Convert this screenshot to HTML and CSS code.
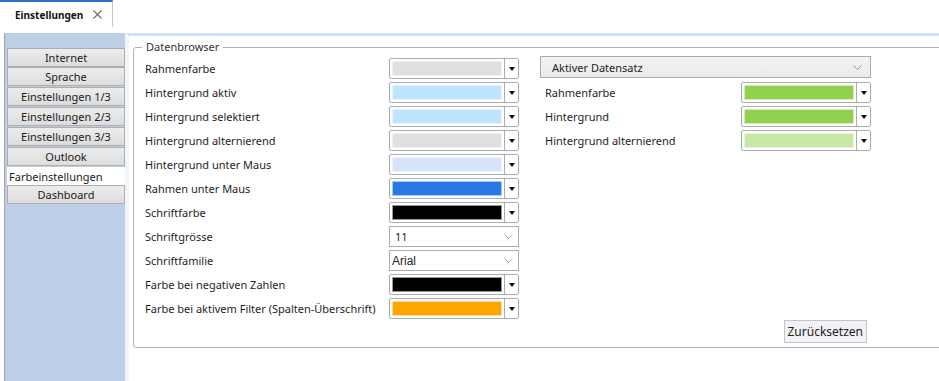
FILE: index.html
```html
<!DOCTYPE html>
<html lang="de">
<head>
    <meta charset="UTF-8">
    <meta name="viewport" content="width=device-width, initial-scale=1.0">
    <title>Einstellungen</title>
    <link rel="stylesheet" href="styles.css">
</head>
<body>
    <div class="page">
        <div class="tabbar">
            <div class="tab">
                <span class="tab-title">Einstellungen</span>
                <svg class="tab-close" width="9" height="9" viewBox="0 0 9 9"><path d="M0.5 0.5 L8.5 8.5 M8.5 0.5 L0.5 8.5" stroke="#6d6d6d" stroke-width="1.1"/></svg>
            </div>
        </div>

        <div class="main">
            <nav class="sidebar">
                <button class="nav-btn first">Internet</button>
                <button class="nav-btn">Sprache</button>
                <button class="nav-btn">Einstellungen 1/3</button>
                <button class="nav-btn">Einstellungen 2/3</button>
                <button class="nav-btn">Einstellungen 3/3</button>
                <button class="nav-btn">Outlook</button>
                <button class="nav-btn active">Farbeinstellungen</button>
                <button class="nav-btn">Dashboard</button>
            </nav>

            <div class="content">
                <fieldset class="group">
                    <legend>Datenbrowser</legend>
                    <div class="columns">
                        <div class="form-grid left-grid">
                            <span class="label">Rahmenfarbe</span>
                            <div class="color-combo"><span class="swatch c-border"></span><span class="drop"><i></i></span></div>

                            <span class="label">Hintergrund aktiv</span>
                            <div class="color-combo"><span class="swatch c-active"></span><span class="drop"><i></i></span></div>

                            <span class="label">Hintergrund selektiert</span>
                            <div class="color-combo"><span class="swatch c-active"></span><span class="drop"><i></i></span></div>

                            <span class="label">Hintergrund alternierend</span>
                            <div class="color-combo"><span class="swatch c-border"></span><span class="drop"><i></i></span></div>

                            <span class="label">Hintergrund unter Maus</span>
                            <div class="color-combo"><span class="swatch c-hover"></span><span class="drop"><i></i></span></div>

                            <span class="label">Rahmen unter Maus</span>
                            <div class="color-combo"><span class="swatch c-blue"></span><span class="drop"><i></i></span></div>

                            <span class="label">Schriftfarbe</span>
                            <div class="color-combo"><span class="swatch c-black"></span><span class="drop"><i></i></span></div>

                            <span class="label">Schriftgrösse</span>
                            <div class="text-combo"><span class="value">11</span><svg class="chev" width="9" height="5" viewBox="0 0 9 5"><path d="M0.5 0.5 L4.5 4.5 L8.5 0.5" fill="none" stroke="#a8a8a8"/></svg></div>

                            <span class="label">Schriftfamilie</span>
                            <div class="text-combo"><span class="value arial">Arial</span><svg class="chev" width="9" height="5" viewBox="0 0 9 5"><path d="M0.5 0.5 L4.5 4.5 L8.5 0.5" fill="none" stroke="#a8a8a8"/></svg></div>

                            <span class="label">Farbe bei negativen Zahlen</span>
                            <div class="color-combo"><span class="swatch c-black"></span><span class="drop"><i></i></span></div>

                            <span class="label">Farbe bei aktivem Filter (Spalten-Überschrift)</span>
                            <div class="color-combo"><span class="swatch c-orange"></span><span class="drop"><i></i></span></div>
                        </div>

                        <div class="right-col">
                            <div class="section-combo">
                                <span>Aktiver Datensatz</span>
                                <svg class="chev" width="9" height="5" viewBox="0 0 9 5"><path d="M0.5 0.5 L4.5 4.5 L8.5 0.5" fill="none" stroke="#9a9a9a"/></svg>
                            </div>
                            <div class="form-grid right-grid">
                                <span class="label">Rahmenfarbe</span>
                                <div class="color-combo"><span class="swatch c-green"></span><span class="drop"><i></i></span></div>

                                <span class="label">Hintergrund</span>
                                <div class="color-combo"><span class="swatch c-green"></span><span class="drop"><i></i></span></div>

                                <span class="label">Hintergrund alternierend</span>
                                <div class="color-combo"><span class="swatch c-lightgreen"></span><span class="drop"><i></i></span></div>
                            </div>
                        </div>
                    </div>
                    <div class="footer">
                        <button class="reset-btn">Zurücksetzen</button>
                    </div>
                </fieldset>
            </div>
        </div>
    </div>
</body>
</html>
```

FILE: styles.css
```css
html, body {
    margin: 0;
    height: 100%;
}
body {
    font-family: "Noto Sans", "Open Sans", sans-serif;
    font-size: 11px;
    color: #1e1e1e;
    background-color: white;
}
.page {
    display: flex;
    flex-direction: column;
    height: 100vh;
    overflow: hidden;
}

/* tab strip */
.tabbar {
    height: 33px;
    flex: none;
}
.tab {
    width: 112px;
    height: 25px;
    border-top: 2px solid #2f6fc4;
    border-right: 1px solid #c6c6c6;
    display: flex;
    align-items: center;
    box-sizing: content-box;
}
.tab-title {
    font-weight: bold;
    font-size: 10px;
    margin-left: 15px;
    color: #111;
}
.tab-close {
    margin-left: auto;
    margin-right: 10px;
}

/* main area */
.main {
    display: flex;
    flex: 1;
    min-height: 0;
}
.sidebar {
    width: 118px;
    margin-left: 4px;
    border-left: 1px solid #a4a4a4;
    background-color: #bccfe6;
    padding: 15px 0 0 2px;
    display: flex;
    flex-direction: column;
    gap: 1px;
}
.nav-btn {
    height: 19px;
    flex: none;
    padding: 0;
    border: 1px solid #adadad;
    background: linear-gradient(#ececec, #dddddd);
    font-family: inherit;
    font-size: 11px;
    color: #1a1a1a;
    text-align: center;
}
.nav-btn.first {
    margin-bottom: -1px;
}
.nav-btn.active {
    height: 18px;
    margin-bottom: -1px;
    background: white;
    border-color: white;
    text-align: left;
    padding-left: 1px;
}

.content {
    flex: 1;
    min-width: 0;
    overflow: hidden;
    border-top: 3px solid #d0e1f3;
    border-left: 4px solid #f1f6fd;
    padding-left: 4px;
}

/* group box */
.group {
    width: 880px;
    margin: 3px 0 0 0;
    padding: 3px 0 4px 11px;
    border: 1px solid #b3b3bd;
    border-radius: 3px;
}
.group legend {
    margin-left: -3px;
    padding: 0 4px;
    line-height: 16px;
    color: #333;
}
.columns {
    display: flex;
    gap: 21px;
}
.form-grid {
    display: grid;
    grid-auto-rows: 21px;
    row-gap: 3px;
    align-items: center;
}
.left-grid {
    grid-template-columns: 244px 130px;
}
.right-grid {
    grid-template-columns: 201px 130px;
}
.right-grid .label {
    padding-left: 5px;
}
.label {
    white-space: nowrap;
}

/* colour picker combo */
.color-combo {
    height: 21px;
    box-sizing: border-box;
    border: 1px solid #aaacb2;
    border-radius: 2px;
    display: flex;
}
.swatch {
    flex: 1;
    margin: 2px;
    border: 1px solid rgba(255, 255, 255, 0.6);
}
.drop {
    width: 13px;
    border-left: 1px solid #aaacb2;
    display: flex;
    align-items: center;
    justify-content: center;
}
.drop i {
    width: 0;
    height: 0;
    border-left: 3.5px solid transparent;
    border-right: 3.5px solid transparent;
    border-top: 4px solid black;
}
.c-border { background-color: #dfdfdf; }
.c-active { background-color: #bfe4fd; }
.c-hover { background-color: #d5e4f9; }
.c-blue { background-color: #2a78e6; }
.c-black { background-color: #000000; }
.c-orange { background-color: #ffa500; }
.c-green { background-color: #92d050; }
.c-lightgreen { background-color: #c8e8a8; }

/* plain combo */
.text-combo {
    height: 21px;
    box-sizing: border-box;
    border: 1px solid #aaacb2;
    display: flex;
    align-items: center;
    justify-content: space-between;
    padding: 0 5px;
}
.text-combo .value.arial {
    font-family: "Liberation Sans", Arial, sans-serif;
    font-size: 12px;
    margin-left: -3px;
}

.right-col {
    display: flex;
    flex-direction: column;
    gap: 4px;
}
.section-combo {
    width: 331px;
    height: 22px;
    margin-top: -2px;
    box-sizing: border-box;
    border: 1px solid #acacac;
    background: linear-gradient(#f2f2f2, #ebebeb);
    display: flex;
    align-items: center;
    justify-content: space-between;
    padding: 0 8px 0 11px;
}

.footer {
    width: 726px;
    display: flex;
    justify-content: flex-end;
    padding-right: 4px;
    box-sizing: border-box;
    margin-top: 1px;
}
.reset-btn {
    height: 23px;
    padding: 0 3px;
    border: 1px solid #c3c3cc;
    background-color: #f1f1f6;
    font-family: inherit;
    font-size: 12px;
    color: #222;
}
```
